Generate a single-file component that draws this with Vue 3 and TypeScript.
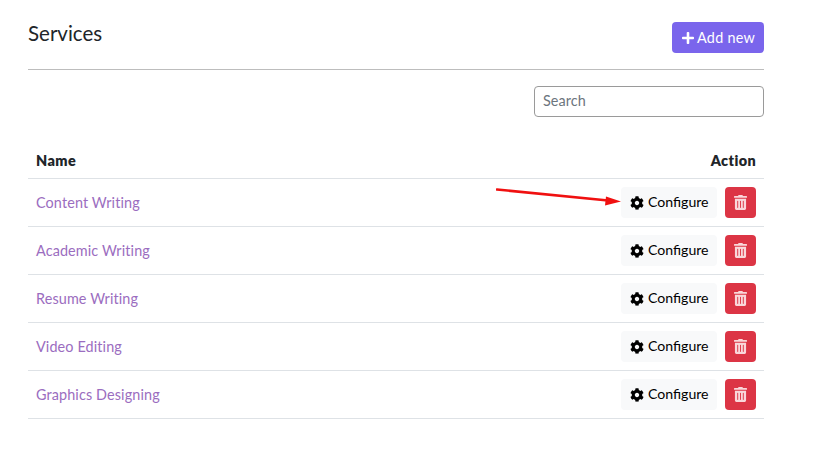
<script setup lang="ts">
const services: string[] = ['Content Writing', 'Academic Writing', 'Resume Writing', 'Video Editing', 'Graphics Designing']
const gear = 'M487.4 315.7l-42.6-24.6c4.3-23.2 4.3-47 0-70.2l42.6-24.6c4.9-2.8 7.1-8.6 5.5-14-11.1-35.6-30-67.8-54.7-94.6-3.8-4.1-10-5.1-14.8-2.3L380.8 110c-17.9-15.4-38.5-27.3-60.8-35.1V25.8c0-5.6-3.9-10.5-9.4-11.7-36.7-8.2-74.3-7.8-109.2 0-5.5 1.2-9.4 6.1-9.4 11.7V75c-22.2 7.9-42.8 19.8-60.8 35.1L88.7 85.5c-4.9-2.8-11-1.9-14.8 2.3-24.7 26.7-43.6 58.9-54.7 94.6-1.7 5.4.6 11.2 5.5 14L67.3 221c-4.3 23.2-4.3 47 0 70.2l-42.6 24.6c-4.9 2.8-7.1 8.6-5.5 14 11.1 35.6 30 67.8 54.7 94.6 3.8 4.1 10 5.1 14.8 2.3l42.6-24.6c17.9 15.4 38.5 27.3 60.8 35.1v49.2c0 5.6 3.9 10.5 9.4 11.7 36.7 8.2 74.3 7.8 109.2 0 5.5-1.2 9.4-6.1 9.4-11.7v-49.2c22.2-7.9 42.8-19.8 60.8-35.1l42.6 24.6c4.9 2.8 11 1.9 14.8-2.3 24.7-26.7 43.6-58.9 54.7-94.6 1.5-5.5-.7-11.3-5.6-14.1zM256 336c-44.1 0-80-35.9-80-80s35.9-80 80-80 80 35.9 80 80-35.9 80-80 80z'
const trash = 'M32 464a48 48 0 0 0 48 48h288a48 48 0 0 0 48-48V128H32zm272-256a16 16 0 0 1 32 0v224a16 16 0 0 1-32 0zm-96 0a16 16 0 0 1 32 0v224a16 16 0 0 1-32 0zm-96 0a16 16 0 0 1 32 0v224a16 16 0 0 1-32 0zM432 32H312l-9.4-18.7A24 24 0 0 0 281.1 0H166.8a23.72 23.72 0 0 0-21.4 13.3L136 32H16A16 16 0 0 0 0 48v32a16 16 0 0 0 16 16h416a16 16 0 0 0 16-16V48a16 16 0 0 0-16-16z'
const plus = 'M416 208H272V64c0-17.67-14.33-32-32-32h-32c-17.67 0-32 14.33-32 32v144H32c-17.67 0-32 14.33-32 32v32c0 17.67 14.33 32 32 32h144v144c0 17.67 14.33 32 32 32h32c17.67 0 32-14.33 32-32V304h144c17.67 0 32-14.33 32-32v-32c0-17.67-14.33-32-32-32z'
</script>

<template>
  <div class="page">
    <header class="head">
      <h1 class="title">Services</h1>
      <button class="add" type="button">
        <svg class="add-ico" viewBox="0 0 448 512"><path :d="plus" fill="currentColor" /></svg>
        Add new
      </button>
    </header>
    <div class="tools">
      <input class="search" type="text" placeholder="Search" />
    </div>
    <div class="table">
      <div class="row th">
        <span class="name-h">Name</span>
        <span class="action-h">Action</span>
      </div>
      <div v-for="s in services" :key="s" class="row">
        <a class="link">{{ s }}</a>
        <div class="actions">
          <button class="conf" type="button">
            <svg class="gear" viewBox="0 0 512 512"><path :d="gear" fill="#000" /></svg>
            Configure
          </button>
          <button class="del" type="button" aria-label="Delete">
            <svg class="trash" viewBox="0 0 448 512"><path :d="trash" fill="currentColor" /></svg>
          </button>
        </div>
      </div>
    </div>
    <svg class="arrow" width="140" height="30" viewBox="0 0 140 30">
      <path d="M1 5.5 L112 16.5" stroke="#f01010" stroke-width="2.6" fill="none" stroke-linecap="round" />
      <path d="M125 17.5 L110 12.5 L109 21.5 Z" fill="#f01010" />
    </svg>
  </div>
</template>

<style scoped>
.page {
  position: relative;
  box-sizing: border-box;
  width: 832px;
  height: 458px;
  padding: 22px 68px 0 28px;
  background: #fff;
  font-family: Lato, "Open Sans", sans-serif;
  font-size: 14.4px;
  color: #212529;
  overflow: hidden;
}
.head {
  display: flex;
  justify-content: space-between;
  align-items: flex-start;
  height: 47px;
  border-bottom: 1px solid #bdbdbd;
}
.title {
  margin: 0;
  font-size: 20.5px;
  font-weight: 400;
  line-height: 22px;
}
.add {
  display: flex;
  align-items: center;
  gap: 3px;
  width: 92px;
  height: 31px;
  padding: 0 0 0 10px;
  border: 0;
  border-radius: 4px;
  background: #7a65ec;
  color: #fff;
  font: inherit;
  letter-spacing: 0.25px;
}
.add-ico { width: 12px; height: 14px; }
.tools {
  display: flex;
  justify-content: flex-end;
  margin-top: 16px;
}
.search {
  box-sizing: border-box;
  width: 230px;
  height: 31px;
  padding: 0 8px 2px;
  border: 1px solid #9a9a9a;
  border-radius: 4px;
  font: inherit;
  letter-spacing: 0.1px;
  color: #212529;
  outline: none;
}
.search::placeholder { color: #6c757d; opacity: 1; }
.table { margin-top: 13px; }
.row {
  display: flex;
  justify-content: space-between;
  align-items: center;
  box-sizing: border-box;
  height: 48px;
  padding: 0 8px;
  border-bottom: 1px solid #dee2e6;
}
.th {
  height: 49px;
  align-items: flex-end;
  padding-bottom: 9px;
  font-weight: 800;
  letter-spacing: 0.4px;
}
.link { color: #9b6dc0; letter-spacing: 0.12px; }
.actions { display: flex; gap: 8px; }
.conf {
  display: flex;
  align-items: center;
  gap: 4px;
  width: 96px;
  height: 31px;
  padding: 0 0 2px 9px;
  border: 0;
  border-radius: 4px;
  background: #f8f9fa;
  color: #000;
  font: inherit;
  font-size: 14.1px;
}
.gear { width: 14px; height: 14px; margin-top: 2px; }
.del {
  display: flex;
  align-items: center;
  justify-content: center;
  width: 31px;
  height: 31px;
  padding: 0;
  border: 0;
  border-radius: 4px;
  background: #dc3545;
  color: #f9d7da;
}
.trash { width: 13px; height: 15px; }
.arrow {
  position: absolute;
  left: 496px;
  top: 184px;
}
</style>
